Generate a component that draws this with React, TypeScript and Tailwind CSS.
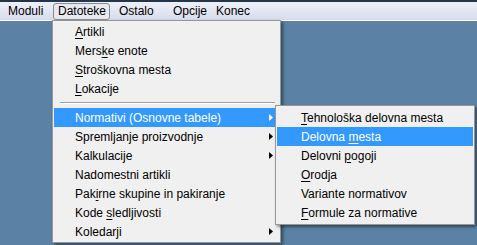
import React from 'react';

type Item = {
  label: string;
  ul?: number;
  sub?: boolean;
  active?: boolean;
};

const mainItems: Item[] = [
  { label: 'Artikli', ul: 0 },
  { label: 'Merske enote', ul: 4 },
  { label: 'Stroškovna mesta', ul: 0 },
  { label: 'Lokacije', ul: 0 },
];

const moreItems: Item[] = [
  { label: 'Normativi (Osnovne tabele)', sub: true, active: true },
  { label: 'Spremljanje proizvodnje', sub: true },
  { label: 'Kalkulacije', sub: true },
  { label: 'Nadomestni artikli' },
  { label: 'Pakirne skupine in pakiranje', ul: 3 },
  { label: 'Kode sledljivosti', ul: 5 },
  { label: 'Koledarji', sub: true },
];

const subItems: Item[] = [
  { label: 'Tehnološka delovna mesta', ul: 0 },
  { label: 'Delovna mesta', ul: 8, active: true },
  { label: 'Delovni pogoji', ul: 8 },
  { label: 'Orodja', ul: 0 },
  { label: 'Variante normativov' },
  { label: 'Formule za normative', ul: 0 },
];

const Label: React.FC<{ text: string; ul?: number }> = ({ text, ul }) => {
  if (ul === undefined) return <span>{text}</span>;
  return (
    <span>
      {text.slice(0, ul)}
      <span className="underline underline-offset-2">{text[ul]}</span>
      {text.slice(ul + 1)}
    </span>
  );
};

const Arrow: React.FC<{ white?: boolean }> = ({ white }) => (
  <svg width="4" height="7" viewBox="0 0 4 7" className="shrink-0">
    <path d="M0 0 L4 3.5 L0 7 Z" fill={white ? '#ffffff' : '#000000'} />
  </svg>
);

const Row: React.FC<{ item: Item; indent: string }> = ({ item, indent }) => (
  <div
    className={`h-[19px] flex items-center justify-between pr-[6px] ${indent} ${
      item.active ? 'bg-[#3399ff] text-white' : 'text-black'
    }`}
  >
    <Label text={item.label} ul={item.ul} />
    {item.sub && <Arrow white={item.active} />}
  </div>
);

export default function App() {
  return (
    <div
      className="relative w-[477px] h-[245px] overflow-hidden bg-[#5b82a4] text-[12px] leading-none"
      style={{ fontFamily: '"Liberation Sans", Arial, sans-serif' }}
    >
      {/* menu bar */}
      <div className="h-[21px] border-t-2 border-[#26364a] border-b border-b-white bg-gradient-to-b from-[#eef1f8] to-[#d7dcec] flex items-center pl-[8px]">
        <div className="w-[45px]">Moduli</div>
        <div className="w-[57px] h-[17px] px-[4px] flex items-center rounded-[3px] border border-[#8b8c8e] bg-[#e6e9f0]">
          Datoteke
        </div>
        <div className="ml-[9px] w-[54px]">Ostalo</div>
        <div className="w-[43px]">Opcije</div>
        <div>Konec</div>
      </div>

      {/* Datoteke dropdown */}
      <div className="absolute left-[52px] top-[20px] w-[229px] h-[223px] bg-[#f0f0f0] border border-[#979797] shadow-[2px_2px_3px_rgba(0,0,0,0.45)] px-[1px] pt-[1px]">
        {mainItems.map(i => (
          <Row key={i.label} item={i} indent="pl-[21px]" />
        ))}
        <div className="h-[10px] flex items-center pl-[6px] pr-[4px]">
          <div className="w-full h-px bg-[#a0a0a0] border-b border-white box-content" />
        </div>
        {moreItems.map(i => (
          <Row key={i.label} item={i} indent="pl-[21px]" />
        ))}
      </div>

      {/* Normativi submenu */}
      <div className="absolute left-[275px] top-[105px] w-[200px] h-[120px] bg-[#f0f0f0] border border-[#979797] shadow-[2px_2px_3px_rgba(0,0,0,0.45)] px-[1px] pt-[2px]">
        {subItems.map(i => (
          <Row key={i.label} item={i} indent="pl-[24px]" />
        ))}
      </div>
    </div>
  );
}
